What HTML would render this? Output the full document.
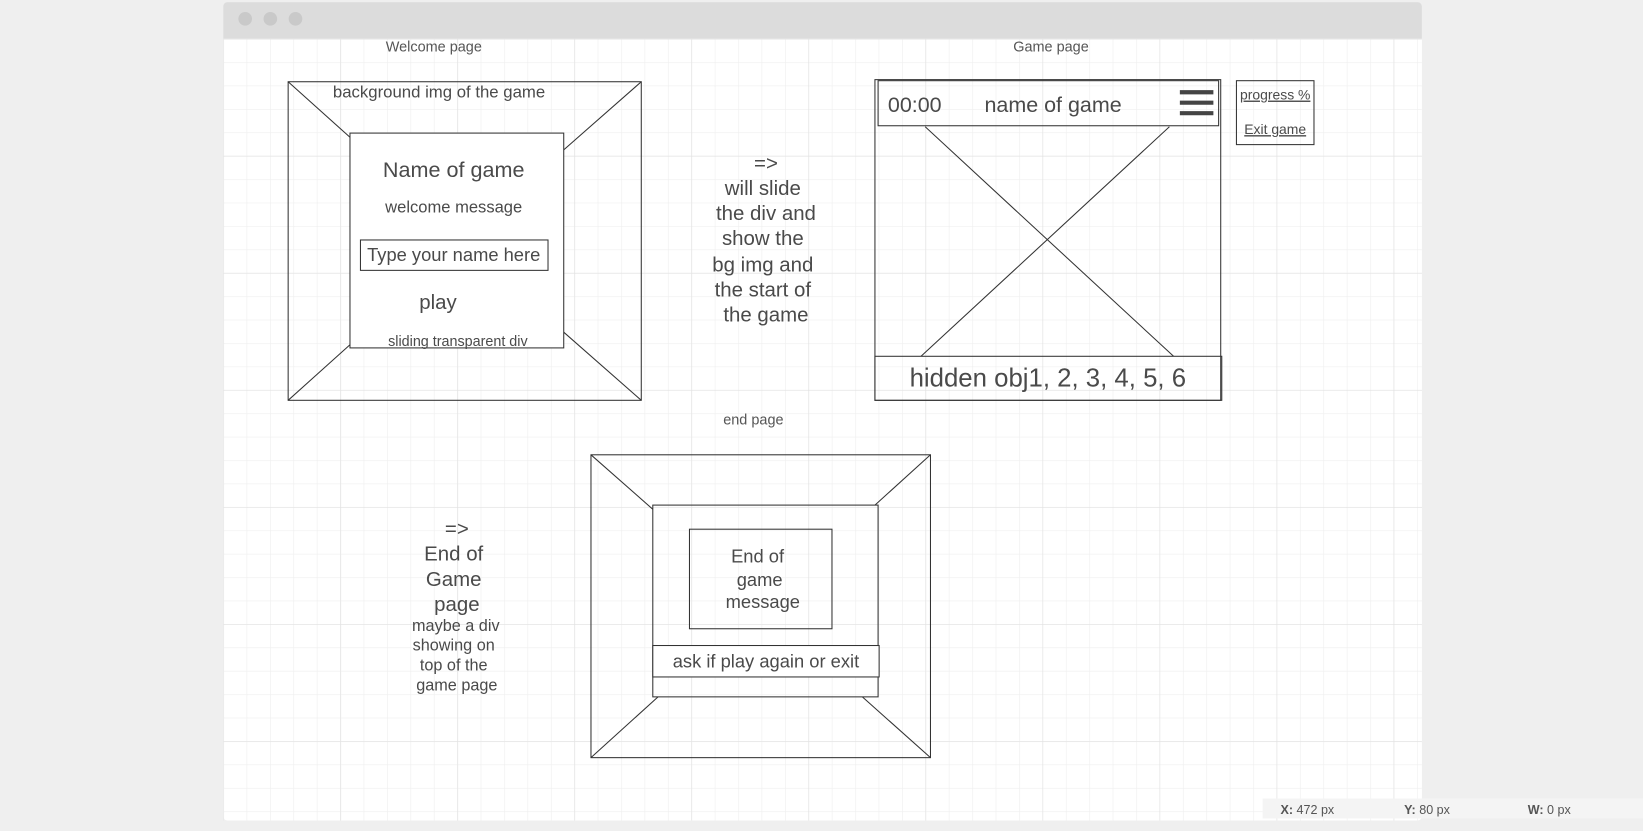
<!DOCTYPE html>
<html><head><meta charset="utf-8"><style>
html,body{margin:0;padding:0;width:1643px;height:831px;overflow:hidden;background:#efefef;font-family:"Liberation Sans",sans-serif}
#w{width:1568px;height:793px;transform:scale(1.04783,1.04792);transform-origin:0 0;position:relative}
</style></head><body><div id="w">
<svg width="1568" height="793" viewBox="0 0 1568 793" xmlns="http://www.w3.org/2000/svg" font-family="Liberation Sans, sans-serif" fill="#4a4a4a">
<defs>
<pattern id="g1" x="213" y="37" width="22.34" height="22.34" patternUnits="userSpaceOnUse"><path d="M0 0H22.34M0 0V22.34" stroke="#efefef" stroke-width="1.2" fill="none"/></pattern>
<pattern id="g2" x="213" y="37" width="111.7" height="111.7" patternUnits="userSpaceOnUse"><path d="M0 0H111.7M0 0V111.7" stroke="#e2e2e2" stroke-width="1.2" fill="none"/></pattern>
</defs>
<rect x="213" y="2" width="1144" height="781" rx="4" fill="#fff"/>
<rect x="213" y="37" width="1144" height="746" fill="url(#g1)"/>
<rect x="213" y="37" width="1144" height="746" fill="url(#g2)"/>
<path d="M213 37V6a4 4 0 0 1 4-4h1136a4 4 0 0 1 4 4v31z" fill="#dcdcdc"/>
<circle cx="234" cy="18" r="6.5" fill="#c9c9c9"/><circle cx="258" cy="18" r="6.5" fill="#c9c9c9"/><circle cx="282" cy="18" r="6.5" fill="#c9c9c9"/>
<rect x="1205" y="762" width="363" height="19" fill="#f4f4f4"/>
<g font-size="12" fill="#555"><text x="1222" y="777"><tspan font-weight="bold">X:</tspan> 472 px</text><text x="1340" y="777"><tspan font-weight="bold">Y:</tspan> 80 px</text><text x="1458" y="777"><tspan font-weight="bold">W:</tspan> 0 px</text></g>

<g stroke="#333" stroke-width="1" fill="none">
<rect x="275" y="78" width="337" height="304"/>
<rect x="334" y="127" width="204" height="205" fill="#fff"/>
<path d="M275 78L334 131M612 78L538 143M275 382L334 329M612 382L538 317"/>
<rect x="344" y="229" width="179" height="29"/>
<rect x="835" y="76" width="330" height="306"/>
<rect x="838" y="77" width="325" height="43"/>
<path d="M883 121L1120 340M1116 121L879 340"/>
<rect x="835" y="340" width="331" height="42"/>
<rect x="1180" y="77" width="74" height="61"/>
<rect x="564" y="434" width="324" height="289"/>
<rect x="623" y="482" width="215" height="183"/>
<path d="M564 434L623 486M888 434L835 482M564 723L628 665M888 723L823 665"/>
<rect x="658" y="505" width="136" height="95"/>
<rect x="623" y="616" width="216" height="30" fill="#fff"/>
</g>
<g stroke="#444" stroke-width="4"><path d="M1126 88H1158M1126 98H1158M1126 108H1158"/></g>

<g text-anchor="middle">
<text x="414" y="49" font-size="13.8" fill="#555">Welcome page</text>
<text x="419" y="93" font-size="16">background img of the game</text>
<text x="433" y="169" font-size="20.6">Name of game</text>
<text x="433" y="203" font-size="15.8">welcome message</text>
<text x="433" y="249" font-size="17.5">Type your name here</text>
<text x="418" y="295" font-size="19.5">play</text>
<text x="437" y="330" font-size="13.7">sliding transparent div</text>
<g font-size="19.5"><text x="731" y="162">=&gt;</text><text x="728" y="186">will slide</text><text x="731" y="210">the div and</text><text x="728" y="234">show the</text><text x="728" y="259">bg img and</text><text x="728" y="283">the start of</text><text x="731" y="307">the game</text></g>
<text x="1003" y="49" font-size="13.8" fill="#555">Game page</text>
<text x="873" y="107" font-size="20.5">00:00</text>
<text x="1005" y="107" font-size="20.5">name of game</text>
<text x="1000" y="369" font-size="24.6">hidden obj1, 2, 3, 4, 5, 6</text>
<text x="1217" y="95" font-size="13.3" text-decoration="underline">progress %</text>
<text x="1217" y="128" font-size="13.3" text-decoration="underline">Exit game</text>
<text x="719" y="405" font-size="13.8" fill="#555">end page</text>
<g font-size="19.5"><text x="436" y="511">=&gt;</text><text x="433" y="535">End of</text><text x="433" y="559">Game</text><text x="436" y="583">page</text></g>
<g font-size="15.5"><text x="435" y="602">maybe a div</text><text x="433" y="621">showing on</text><text x="433" y="640">top of the</text><text x="436" y="659">game page</text></g>
<g font-size="17.5"><text x="723" y="537">End of</text><text x="725" y="559">game</text><text x="728" y="580">message</text></g>
<text x="731" y="637" font-size="17.5">ask if play again or exit</text>
</g>
</svg>
</div></body></html>
